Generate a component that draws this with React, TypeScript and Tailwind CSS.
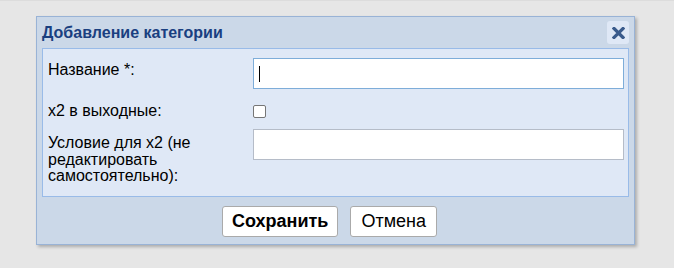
import { useState } from "react";

export default function App() {
  const [name, setName] = useState("");
  const [weekend, setWeekend] = useState(false);
  const [condition, setCondition] = useState("");

  return (
    <div className="h-[268px] w-[674px] overflow-hidden border-t border-[#dcdcdc] bg-[#e6e6e6] pt-[15px] pl-[36px] font-['Liberation_Sans',Arial,sans-serif]">
      <div className="w-[599px] h-[229px] border border-[#99b3d6] bg-[#cbd8e8] px-[5px] shadow-[2px_2px_3px_rgba(0,0,0,0.25)] flex flex-col">
        {/* Title bar */}
        <div className="h-[31px] flex items-center justify-between">
          <span className="text-[16px] leading-[18px] font-bold text-[#1a3f80] pt-[1px]">
            Добавление категории
          </span>
          <button
            type="button"
            className="w-[22px] h-[23px] rounded-[3px] bg-[#dfe8f6] flex items-center justify-center"
            aria-label="Закрыть"
          >
            <svg width="13" height="12" viewBox="0 0 13 12">
              <path
                d="M2 1.5 L11 10.5 M11 1.5 L2 10.5"
                stroke="#3a5b8c"
                strokeWidth="3.2"
                strokeLinecap="square"
              />
            </svg>
          </button>
        </div>

        {/* Form */}
        <div className="border border-[#99bbe8] bg-[#dfe8f6] pl-[5px] pr-[4px] pt-[9px] h-[149px] text-[16px] leading-[16.5px] text-black">
          <div className="flex">
            <label className="w-[205px] pt-[3.5px]">Название *:</label>
            <div className="flex-1 h-[31px] border border-[#7eadd9] bg-white flex items-center pl-[5px]">
              <span className="w-[1px] h-[16px] bg-black" />
              <input
                value={name}
                onChange={(e) => setName(e.target.value)}
                className="flex-1 h-full outline-none bg-transparent"
              />
            </div>
          </div>

          <div className="flex items-start mt-[14px] h-[17px]">
            <label className="w-[205px]">x2 в выходные:</label>
            <input
              type="checkbox"
              checked={weekend}
              onChange={(e) => setWeekend(e.target.checked)}
              className="w-[13px] h-[13px] mt-[2px] appearance-none rounded-[2px] border border-[#767676] bg-white"
            />
          </div>

          <div className="flex mt-[9px]">
            <label className="w-[205px] pt-[6px] pr-[8px]">
              Условие для x2 (не редактировать самостоятельно):
            </label>
            <input
              value={condition}
              onChange={(e) => setCondition(e.target.value)}
              className="flex-1 h-[31px] border border-[#b5bcc8] bg-white outline-none px-[5px]"
            />
          </div>
        </div>

        {/* Buttons */}
        <div className="flex justify-center gap-[12px] pt-[9px] pr-[12px]">
          <button
            type="button"
            className="h-[31px] px-[9px] rounded-[3px] border border-[#aaaaaa] bg-white text-[18px] font-bold text-black"
          >
            Сохранить
          </button>
          <button
            type="button"
            className="h-[31px] px-[10px] rounded-[3px] border border-[#aaaaaa] bg-white text-[18px] text-black"
          >
            Отмена
          </button>
        </div>
      </div>
    </div>
  );
}
